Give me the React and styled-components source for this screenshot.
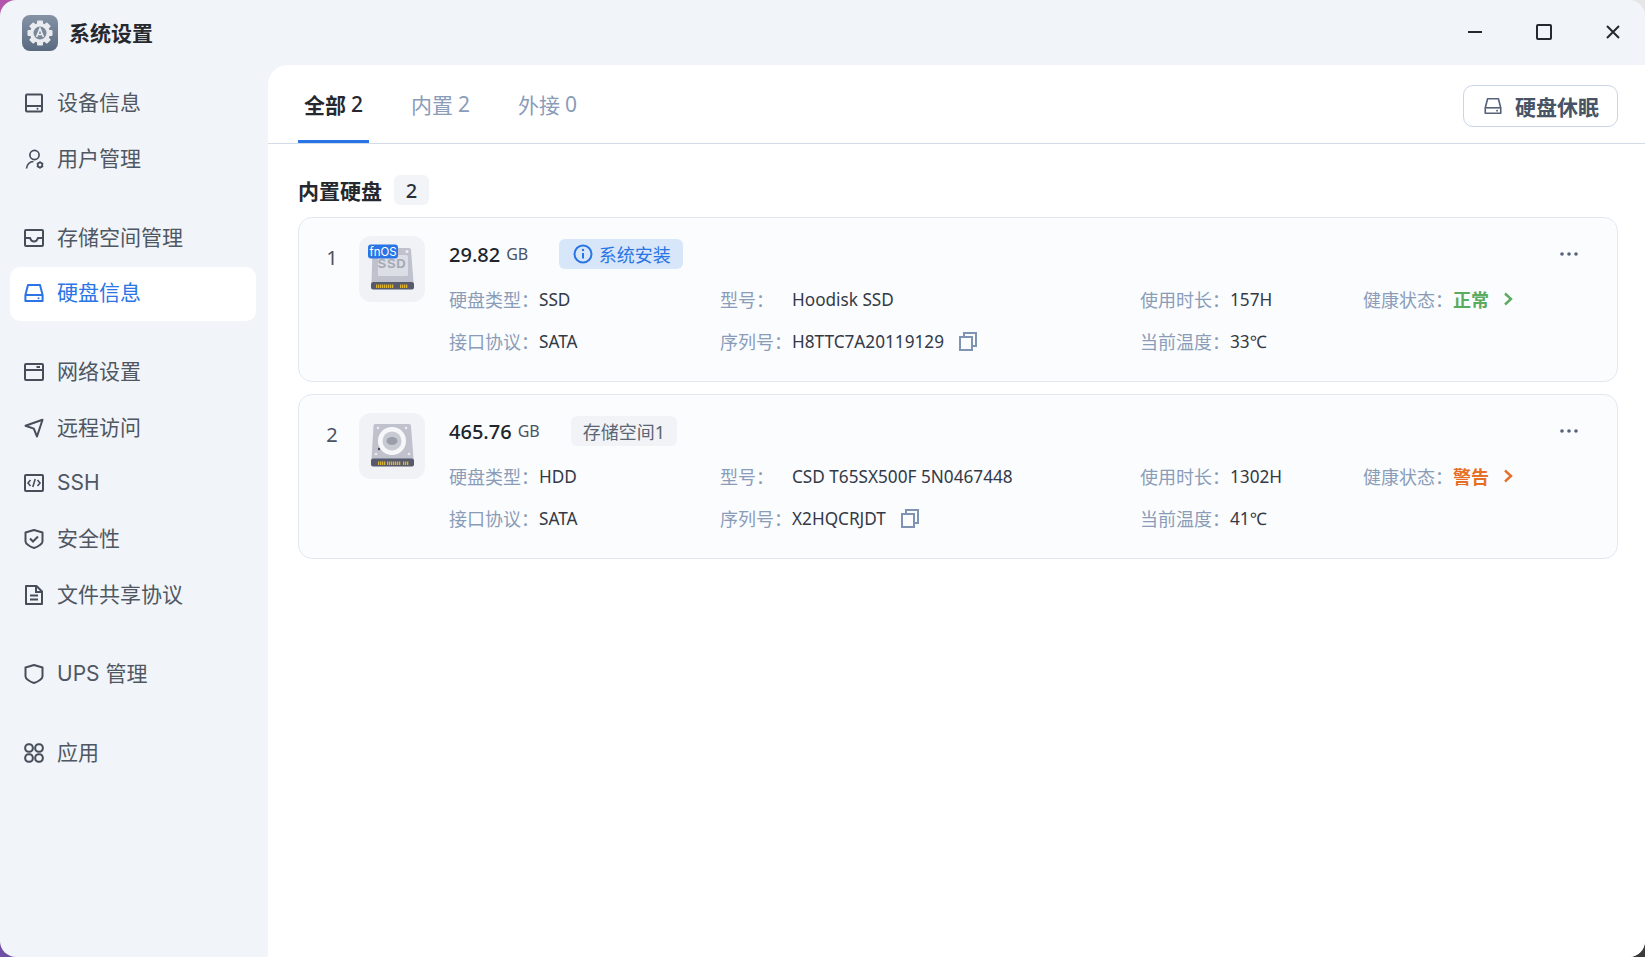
import React from "react";
import styled, { createGlobalStyle } from "styled-components";

const Global = createGlobalStyle`
  html, body { margin: 0; padding: 0; height: 100%; }
  body {
    background-color: #888;
    background-image:
      linear-gradient(135deg, #b355ad 0 50%, transparent 50%),
      linear-gradient(225deg, #e6e6e6 0 50%, transparent 50%),
      linear-gradient(45deg, #6f4ea6 0 50%, transparent 50%),
      linear-gradient(315deg, #3a3a3a 0 50%, transparent 50%);
    background-size: 24px 24px;
    background-position: top left, top right, bottom left, bottom right;
    background-repeat: no-repeat;
    font-family: "Noto Sans", "Noto Sans CJK SC", sans-serif;
  }
  #root { height: 100%; }
  * { box-sizing: border-box; }
`;

const Window = styled.div`
  width: 1645px;
  height: 957px;
  background: #f1f4f9;
  border-radius: 16px;
  overflow: hidden;
  display: flex;
  flex-direction: column;
`;

const TitleBar = styled.header`
  height: 65px;
  flex: none;
  display: flex;
  align-items: center;
  padding: 0 22px;
`;

const AppIcon = styled.svg`
  width: 36px;
  height: 36px;
  flex: none;
`;

const AppTitle = styled.h1`
  margin: 0 0 0 11px;
  font-size: 21px;
  font-weight: 700;
  color: #25292f;
  line-height: 36px;
`;

const WindowControls = styled.div`
  margin-left: auto;
  display: flex;
  gap: 49px;
  align-items: center;
  height: 20px;
  position: relative;
  top: -1px;
`;

const WinSvg = styled.svg`
  width: 20px;
  height: 20px;
  display: block;
  fill: none;
  stroke: #25292f;
  stroke-width: 2;
`;

const Body = styled.div`
  flex: 1;
  display: flex;
  min-height: 0;
`;

const Sidebar = styled.nav`
  width: 268px;
  flex: none;
  padding: 12px 12px 0 10px;
  display: flex;
  flex-direction: column;
  gap: 25px;
`;

const NavGroup = styled.div`
  display: flex;
  flex-direction: column;
  gap: 1.6px;
`;

const NavItem = styled.div`
  height: 54px;
  display: flex;
  align-items: center;
  padding: 0 0 2px 14px;
  gap: 13px;
  border-radius: 10px;
  font-size: 21px;
  font-family: "Inter", "Noto Sans CJK SC", sans-serif;
  background: ${(p) => (p.$active ? "#ffffff" : "transparent")};
  color: ${(p) => (p.$active ? "#2a75e6" : "#4f5762")};
`;

const NavLabel = styled.span`
  line-height: 28px;
`;

const NavSvg = styled.svg`
  width: 20px;
  height: 20px;
  flex: none;
  fill: none;
  stroke: currentColor;
  stroke-width: 2;
  color: ${(p) => (p.$active ? "#2a75e6" : "#474e5a")};
`;

const Main = styled.main`
  flex: 1;
  background: #ffffff;
  border-top-left-radius: 20px;
  min-width: 0;
`;

const TabBar = styled.div`
  height: 79px;
  padding: 0 27px 0 30px;
  border-bottom: 1px solid #d2dbe7;
  display: flex;
`;

const Tabs = styled.div`
  display: flex;
  gap: 36px;
`;

const Tab = styled.div`
  height: 78px;
  padding: 3px 6px 0;
  display: flex;
  align-items: center;
  gap: 5px;
  font-size: 21px;
  font-weight: ${(p) => (p.$active ? 700 : 400)};
  color: ${(p) => (p.$active ? "#25292f" : "#8a9cb8")};
  border-bottom: 3px solid ${(p) => (p.$active ? "#2a75e6" : "transparent")};
`;

const TabCount = styled.span`
  font-weight: ${(p) => (p.$active ? 500 : 400)};
`;

const SleepButton = styled.button`
  margin: 20px 0 0 auto;
  height: 42px;
  padding: 0 18px 0 20px;
  display: flex;
  align-items: center;
  gap: 13.5px;
  background: #ffffff;
  border: 1px solid #c9d4e4;
  border-radius: 10px;
  font-family: inherit;
  font-size: 21px;
  font-weight: 700;
  color: #485366;
`;

const ButtonSvg = styled.svg`
  width: 18px;
  height: 18px;
  fill: none;
  stroke: #56627a;
  stroke-width: 1.8;
`;

const Content = styled.section`
  padding: 31px 27px 0 30px;
`;

const SectionHead = styled.div`
  display: flex;
  align-items: center;
  gap: 12px;
  height: 30px;
  margin-bottom: 12px;
`;

const SectionTitle = styled.h2`
  margin: 0;
  font-size: 21px;
  font-weight: 700;
  color: #25292f;
`;

const CountPill = styled.span`
  width: 35px;
  height: 30px;
  border-radius: 6px;
  background: #f2f4f7;
  display: flex;
  align-items: center;
  justify-content: center;
  font-size: 20px;
  font-weight: 500;
  color: #2b303a;
`;

const CardList = styled.div`
  display: flex;
  flex-direction: column;
  gap: 12px;
`;

const Card = styled.article`
  height: 165px;
  padding: 18px 39px 0 25px;
  border: 1px solid #e3e8f0;
  border-radius: 14px;
  background: #fbfcfe;
  display: flex;
`;

const Index = styled.div`
  width: 16px;
  flex: none;
  margin-right: 19px;
  text-align: center;
  line-height: 44px;
  font-size: 20px;
  color: #4a5362;
`;

const Tile = styled.div`
  width: 66px;
  height: 66px;
  flex: none;
  border-radius: 12px;
  background: #f1f2f6;
  margin-right: 24px;
`;

const TileSvg = styled.svg`
  display: block;
  width: 66px;
  height: 66px;
`;

const Info = styled.div`
  flex: 1;
  min-width: 0;
  padding-top: 3px;
`;

const InfoHead = styled.div`
  height: 30px;
  display: flex;
  align-items: center;
  margin-bottom: 9px;
`;

const Size = styled.span`
  font-size: 20px;
  font-weight: 500;
  color: #20242b;
`;

const Unit = styled.span`
  margin-left: 6px;
  font-size: 16px;
  color: #4a5362;
`;

const Badge = styled.span`
  margin-left: 31px;
  height: 30px;
  padding: ${(p) => (p.$info ? "0 12px 0 13.5px" : "0 11.5px 0 12px")};
  display: inline-flex;
  align-items: center;
  gap: 6px;
  border-radius: 6px;
  font-size: 18px;
  background: ${(p) => (p.$info ? "#d7e6f9" : "#f1f3f6")};
  color: ${(p) => (p.$info ? "#2a75e6" : "#5b6574")};
`;

const InfoSvg = styled.svg`
  width: 20px;
  height: 20px;
  fill: none;
  stroke: #2a75e6;
  stroke-width: 2;
`;

const More = styled.svg`
  margin-left: auto;
  width: 18px;
  height: 4px;
  fill: #56627a;
`;

const Grid = styled.div`
  display: grid;
  grid-template-columns: 271px 420px 223px 1fr;
  grid-auto-rows: 42px;
`;

const Cell = styled.div`
  display: flex;
  align-items: center;
  min-width: 0;
`;

const Label = styled.span`
  width: ${(p) => p.$w}px;
  flex: none;
  font-size: 18px;
  color: #8a9cb8;
`;

const Value = styled.span`
  font-size: 17.2px;
  color: #333a46;
  white-space: nowrap;
`;

const CopySvg = styled.svg`
  width: 20px;
  height: 20px;
  margin-left: 14px;
  fill: none;
  stroke: #7f93b2;
  stroke-width: 2;
`;

const Health = styled.span`
  font-size: 18px;
  font-weight: 700;
  color: ${(p) => p.$color};
`;

const Chevron = styled.svg`
  width: 10px;
  height: 14px;
  margin-left: 14px;
  fill: none;
  stroke: ${(p) => p.$color};
  stroke-width: 2.4;
`;

const Gear = () => {
  const teeth = [0, 45, 90, 135, 180, 225, 270, 315];
  return (
    <AppIcon viewBox="0 0 36 36">
      <defs>
        <linearGradient id="appg" x1="0" y1="0" x2="0" y2="1">
          <stop offset="0" stopColor="#8592a6" />
          <stop offset="1" stopColor="#596a80" />
        </linearGradient>
      </defs>
      <rect width="36" height="36" rx="8" fill="url(#appg)" />
      {teeth.map((a) => (
        <rect key={a} x="15" y="5.5" width="6" height="6" rx="1" fill="#e9ebef" transform={`rotate(${a} 18 18)`} />
      ))}
      <circle cx="18" cy="18" r="10" fill="#e9ebef" />
      <circle cx="18" cy="18" r="6.5" fill="#7a889b" />
      <path d="M14.6 22 18 13.5 21.4 22M15.6 19.5h4.8" fill="none" stroke="#e9ebef" strokeWidth="1.6" />
    </AppIcon>
  );
};

const icons = {
  device: (
    <>
      <rect x="2" y="1.5" width="16" height="17" rx="1" />
      <path d="M2 13h16" />
      <circle cx="13.5" cy="15.8" r="1" fill="currentColor" stroke="none" />
    </>
  ),
  user: (
    <>
      <circle cx="10.5" cy="6" r="4.6" strokeWidth="1.7" />
      <path d="M2.5 19.5c.3-4 3.2-7 7-7" strokeWidth="1.7" />
      <circle cx="16" cy="16" r="2.3" strokeWidth="1.8" />
      <path d="M16 12.2v1.2M16 18.6v1.2M12.8 14.2l1 .6M18.2 17.2l1 .6M12.8 17.8l1-.6M18.2 14.8l1-.6" strokeWidth="1.3" />
    </>
  ),
  storage: (
    <>
      <rect x="1" y="2" width="18" height="16" rx="1" />
      <path d="M1 10h5c1 3 2 3.5 4 3.5s3-.5 4-3.5h5" />
    </>
  ),
  disk: (
    <>
      <path d="M4 2h12l2.6 10v6H1.4v-6z" strokeLinejoin="round" />
      <path d="M1.4 12h17.2" />
      <circle cx="14.5" cy="15.2" r="1" fill="currentColor" stroke="none" />
    </>
  ),
  network: (
    <>
      <rect x="1" y="2" width="18" height="16" rx="1" />
      <path d="M1 8h18M12.5 5h3.5" />
    </>
  ),
  remote: <path d="M1.5 7.8 18.5 1.8 13 18.5 9.8 10.6z" strokeLinejoin="round" />,
  ssh: (
    <>
      <rect x="1" y="2" width="18" height="16" rx="1" />
      <path d="M6.5 7 4 10l2.5 3M13.5 7l2.5 3-2.5 3M11.2 6l-2.4 8" strokeWidth="1.6" />
    </>
  ),
  shieldCheck: (
    <>
      <path d="M10 1 18.5 3.5v9c0 2-4 5-8.5 6.5C5.5 17.5 1.5 14.5 1.5 12.5v-9z" strokeLinejoin="round" />
      <path d="M6 9.5l3 3 5-5" />
    </>
  ),
  file: (
    <>
      <path d="M2 1h10.5L18 6.5V19H2z" strokeLinejoin="round" />
      <path d="M12 1v6h6M6 10.5h8M6 14.5h8" />
    </>
  ),
  shield: <path d="M10 1 18.5 3.5v9c0 2-4 5-8.5 6.5C5.5 17.5 1.5 14.5 1.5 12.5v-9z" strokeLinejoin="round" />,
  apps: (
    <>
      <rect x="1.2" y="1.2" width="7.6" height="7.6" rx="3.4" />
      <rect x="11.2" y="1.2" width="7.6" height="7.6" rx="3.4" />
      <rect x="1.2" y="11.2" width="7.6" height="7.6" rx="3.4" />
      <rect x="11.2" y="11.2" width="7.6" height="7.6" rx="3.4" />
    </>
  ),
};

const navGroups = [
  [
    { icon: "device", label: "设备信息" },
    { icon: "user", label: "用户管理" },
  ],
  [
    { icon: "storage", label: "存储空间管理" },
    { icon: "disk", label: "硬盘信息", active: true },
  ],
  [
    { icon: "network", label: "网络设置" },
    { icon: "remote", label: "远程访问" },
    { icon: "ssh", label: "SSH" },
    { icon: "shieldCheck", label: "安全性" },
    { icon: "file", label: "文件共享协议" },
  ],
  [{ icon: "shield", label: "UPS 管理" }],
  [{ icon: "apps", label: "应用" }],
];

const Pins = ({ spans }) => (
  <>
    {spans.map(([x, n], i) =>
      Array.from({ length: n }).map((_, k) => (
        <rect key={`${i}-${k}`} x={x + k * 2} y="48.5" width="1.3" height="3.5" fill="#dcb332" />
      ))
    )}
  </>
);

const SsdArt = () => (
  <TileSvg viewBox="0 0 66 66">
    <path d="M15 12h35a2 2 0 0 1 2 2l2.5 32H12.5l1-32a1.5 1.5 0 0 1 1.5-2z" fill="#bfc2cc" />
    <rect x="19" y="19" width="30" height="21" rx="1.5" fill="#dcdee5" />
    <text x="33" y="32" textAnchor="middle" fontFamily="Liberation Sans" fontWeight="700" fontSize="13" letterSpacing="0.8" fill="#a5a9b5">SSD</text>
    <circle cx="48" cy="15.5" r="1.5" fill="#eceef2" />
    <rect x="12" y="46" width="43" height="7.5" rx="2" fill="#565a6b" />
    <Pins spans={[[17, 9], [41, 4]]} />
    <rect x="9" y="8.5" width="30" height="14" rx="3" fill="#2a75e6" />
    <text x="24" y="19.8" textAnchor="middle" fontFamily="Inter" fontSize="11.5" fill="#ffffff">fnOS</text>
  </TileSvg>
);

const HddArt = () => (
  <TileSvg viewBox="0 0 66 66">
    <path d="M16 11h34a2 2 0 0 1 2 2l2.5 33H12.5l2-33a2 2 0 0 1 1.5-2z" fill="#bfc2cc" />
    <circle cx="33" cy="28" r="14" fill="#f6f7f9" />
    <circle cx="33" cy="28" r="9.5" fill="#c7cad2" />
    <ellipse cx="33" cy="28" rx="5.5" ry="4" fill="#9a9ea9" />
    <circle cx="20" cy="36" r="1.2" fill="#454a58" />
    <circle cx="19" cy="15" r="1.3" fill="#e8eaef" />
    <circle cx="47" cy="15" r="1.3" fill="#e8eaef" />
    <circle cx="17" cy="41" r="1.3" fill="#e8eaef" />
    <circle cx="50" cy="41" r="1.3" fill="#e8eaef" />
    <rect x="12" y="45.5" width="43" height="8" rx="2" fill="#565a6b" />
    <Pins spans={[[19, 4], [28, 7], [44, 3]]} />
  </TileSvg>
);

const disks = [
  {
    n: 1, size: "29.82", art: <SsdArt />, badge: "系统安装", info: true,
    type: "SSD", proto: "SATA", model: "Hoodisk SSD", serial: "H8TTC7A20119129",
    hours: "157H", temp: "33℃", health: "正常", color: "#5aab5e",
  },
  {
    n: 2, size: "465.76", art: <HddArt />, badge: "存储空间1", info: false,
    type: "HDD", proto: "SATA", model: "CSD T65SX500F 5N0467448", serial: "X2HQCRJDT",
    hours: "1302H", temp: "41℃", health: "警告", color: "#e56f27",
  },
];

export default function App() {
  return (
    <>
      <Global />
      <Window lang="zh-CN">
        <TitleBar>
          <Gear />
          <AppTitle>系统设置</AppTitle>
          <WindowControls>
            <WinSvg viewBox="0 0 20 20"><path d="M3 10h14" /></WinSvg>
            <WinSvg viewBox="0 0 20 20"><rect x="3" y="3" width="14" height="14" rx="1" /></WinSvg>
            <WinSvg viewBox="0 0 20 20"><path d="M4 4l12 12M16 4 4 16" /></WinSvg>
          </WindowControls>
        </TitleBar>
        <Body>
          <Sidebar>
            {navGroups.map((g, i) => (
              <NavGroup key={i}>
                {g.map((it) => (
                  <NavItem key={it.label} $active={it.active}>
                    <NavSvg viewBox="0 0 20 20" $active={it.active}>{icons[it.icon]}</NavSvg>
                    <NavLabel>{it.label}</NavLabel>
                  </NavItem>
                ))}
              </NavGroup>
            ))}
          </Sidebar>
          <Main>
            <TabBar>
              <Tabs>
                <Tab $active>全部<TabCount $active>2</TabCount></Tab>
                <Tab>内置<TabCount>2</TabCount></Tab>
                <Tab>外接<TabCount>0</TabCount></Tab>
              </Tabs>
              <SleepButton>
                <ButtonSvg viewBox="0 0 20 20">{icons.disk}</ButtonSvg>
                硬盘休眠
              </SleepButton>
            </TabBar>
            <Content>
              <SectionHead>
                <SectionTitle>内置硬盘</SectionTitle>
                <CountPill>2</CountPill>
              </SectionHead>
              <CardList>
                {disks.map((d) => (
                  <Card key={d.n}>
                    <Index>{d.n}</Index>
                    <Tile>{d.art}</Tile>
                    <Info>
                      <InfoHead>
                        <Size>{d.size}</Size>
                        <Unit>GB</Unit>
                        <Badge $info={d.info}>
                          {d.info && (
                            <InfoSvg viewBox="0 0 20 20">
                              <circle cx="10" cy="10" r="8.5" />
                              <path d="M10 9v5.5" />
                              <circle cx="10" cy="6" r="1.2" fill="#2a75e6" stroke="none" />
                            </InfoSvg>
                          )}
                          {d.badge}
                        </Badge>
                        <More viewBox="0 0 18 4">
                          <circle cx="2" cy="2" r="1.8" />
                          <circle cx="9" cy="2" r="1.8" />
                          <circle cx="16" cy="2" r="1.8" />
                        </More>
                      </InfoHead>
                      <Grid>
                        <Cell><Label $w={90}>硬盘类型：</Label><Value>{d.type}</Value></Cell>
                        <Cell><Label $w={72}>型号：</Label><Value>{d.model}</Value></Cell>
                        <Cell><Label $w={90}>使用时长：</Label><Value>{d.hours}</Value></Cell>
                        <Cell>
                          <Label $w={90}>健康状态：</Label>
                          <Health $color={d.color}>{d.health}</Health>
                          <Chevron viewBox="0 0 10 14" $color={d.color}><path d="M2 1.5 8 7l-6 5.5" /></Chevron>
                        </Cell>
                        <Cell><Label $w={90}>接口协议：</Label><Value>{d.proto}</Value></Cell>
                        <Cell>
                          <Label $w={72}>序列号：</Label>
                          <Value>{d.serial}</Value>
                          <CopySvg viewBox="0 0 20 20">
                            <rect x="2" y="6" width="12" height="13" />
                            <path d="M6 6V2h12v13h-4" />
                          </CopySvg>
                        </Cell>
                        <Cell><Label $w={90}>当前温度：</Label><Value>{d.temp}</Value></Cell>
                      </Grid>
                    </Info>
                  </Card>
                ))}
              </CardList>
            </Content>
          </Main>
        </Body>
      </Window>
    </>
  );
}
